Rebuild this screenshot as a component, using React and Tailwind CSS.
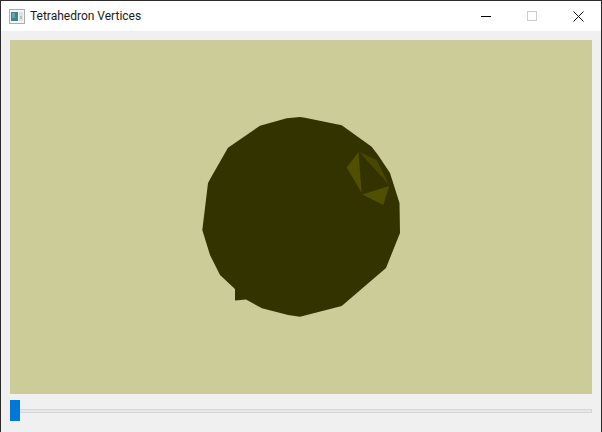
export default function App() {
  const silhouette = "300,117 305,117.7 341.7,125.3 371.7,146.7 378,155 390,173 399.5,203 400,233 386,268 341.7,306 300,316.7 288,315 262,308.3 246,299.5 235,300.5 235,289 220,275 210,255 202.3,230 205,208 208,183 210.7,178 225,153 228,147.7 260,125.7 286.7,118.3";
  return (
    <div className="w-[602px] h-[432px] flex flex-col bg-[#f0f0f0] border-x border-t border-[#2b2b2b] overflow-hidden" style={{ fontFamily: 'Roboto, sans-serif' }}>
      <div className="h-[30px] bg-white flex items-center shrink-0">
        <svg width="16" height="15" viewBox="0 0 16 15" className="ml-[8px] mt-[1px]">
          <rect x="0.5" y="0.5" width="15" height="14" fill="#f4f6f6" stroke="#a9adad" />
          <rect x="2" y="3" width="7" height="9" fill="#3f8583" />
          <rect x="3" y="4" width="3" height="5" fill="#5fa9b5" />
          <rect x="10" y="3" width="4" height="9" fill="#dfe3e3" />
          <rect x="11" y="7" width="2" height="3" fill="#b8bebe" />
        </svg>
        <span className="ml-[5px] text-[12px] leading-none text-[#1a1a1a] mb-[1px]">Tetrahedron Vertices</span>
        <div className="ml-auto flex items-center h-full">
          <div className="w-[46px] h-full flex items-center justify-center">
            <div className="w-[10px] h-px bg-black" />
          </div>
          <div className="w-[46px] h-full flex items-center justify-center">
            <div className="w-[10px] h-[10px] border border-[#cccccc]" />
          </div>
          <div className="w-[46px] h-full flex items-center justify-center">
            <svg width="11" height="11" viewBox="0 0 11 11">
              <path d="M0.5 0.5L10.5 10.5M10.5 0.5L0.5 10.5" stroke="#111" strokeWidth="1" fill="none" />
            </svg>
          </div>
        </div>
      </div>
      <div className="flex-1 flex flex-col pt-[9px] pl-[9px] pr-[9px]">
        <div className="h-[354px] w-[582px] bg-[#cccc99] shrink-0">
          <svg width="582" height="354" viewBox="10 40 582 354" className="block">
            <polygon points={silhouette} fill="#333300" />
            <polygon points="358.5,152 346.7,167.5 361.7,193" fill="#505000" />
            <polygon points="359.3,152 376.7,160 389.3,185" fill="#4a4800" />
            <polygon points="362.3,194.5 389.3,186 383.3,205" fill="#505000" />
          </svg>
        </div>
        <div className="relative h-[21px] mt-[6px] w-[582px] flex items-center">
          <div className="w-full h-[4px] bg-[#e7e7e7] border border-[#d6d6d6]" />
          <div className="absolute left-0 top-0 w-[10px] h-[21px] bg-[#0078d7]" />
        </div>
      </div>
    </div>
  );
}
